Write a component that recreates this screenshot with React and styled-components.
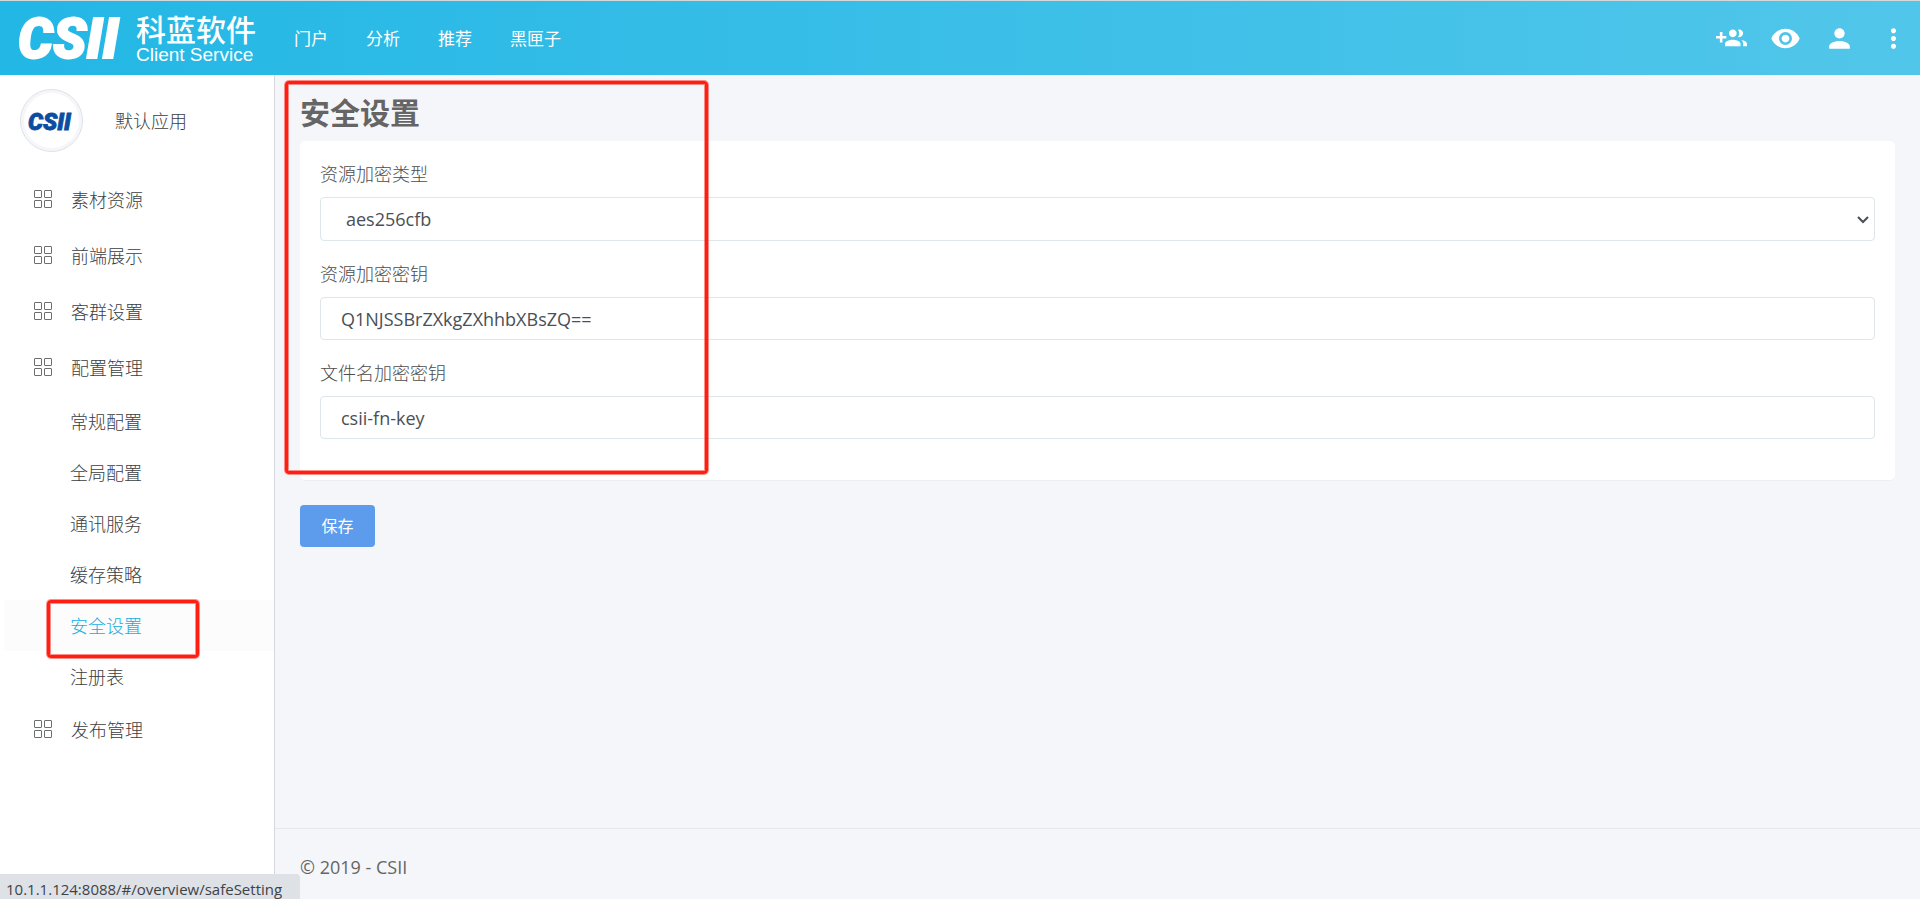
import React, { useState } from 'react'
import styled, { createGlobalStyle, css } from 'styled-components'
import { MdPerson, MdMoreVert, MdVisibility } from 'react-icons/md'

const GlobalStyle = createGlobalStyle`
  :root{
    --primary: #14ade0;
    --text: #656565;
    --border: #dde6e9;
    --bg: #f5f6fa;
    --mark: #ff1f12;
  }
  *{
    box-sizing: border-box;
  }
  body{
    margin: 0;
    background: var(--bg);
    color: var(--text);
    font-family: "Open Sans", "Noto Sans CJK SC", sans-serif;
    font-size: 17px;
    line-height: 26px;
  }
  a{
    color: inherit;
    text-decoration: none;
  }
`

const Page = styled.div`
  display: flex;
  flex-direction: column;
  min-height: 100vh;
`

const HeaderStyled = styled.header`
  display: flex;
  align-items: center;
  height: 75px;
  padding: 0 11px 0 18px;
  border-top: 1px solid #d3d8db;
  background: linear-gradient(to right, #23b7e5, #51c6ea);
  color: #fff;
`

const Brand = styled.a`
  display: flex;
  align-items: center;
  gap: 8px;
  width: 276px;
`

const BrandName = styled.span`
  display: flex;
  flex-direction: column;
  .cn{
    font-size: 30px;
    line-height: 33px;
    font-weight: 500;
  }
  .en{
    font-family: "Liberation Sans", sans-serif;
    font-size: 19px;
    line-height: 18px;
  }
`

const TopNav = styled.nav`
  display: flex;
  flex: 1;
  gap: 38px;
  padding-top: 2px;
`

const Tools = styled.div`
  display: flex;
  gap: 23px;
`

const IconButton = styled.button`
  display: flex;
  padding: 0;
  border: 0;
  background: none;
  color: #fff;
  cursor: pointer;
  svg{
    width: 31px;
    height: 31px;
  }
`

const Body = styled.div`
  display: flex;
  flex: 1;
`

const Sidebar = styled.aside`
  flex: none;
  width: 275px;
  border-right: 1px solid #d5d7dc;
  background: #fff;
  color: #3c3d3e;
  font-size: 18px;
  font-weight: 300;
`

const Profile = styled.div`
  display: flex;
  align-items: center;
  gap: 32px;
  height: 97px;
  padding: 0 20px 6px;
`

const Avatar = styled.span`
  display: flex;
  align-items: center;
  justify-content: center;
  width: 63px;
  height: 63px;
  border: 1px solid #dde0e5;
  border-radius: 50%;
  background: #fff;
  box-shadow: inset 0 0 0 3px #f5f6fa;
`

const Menu = styled.ul`
  margin: 0;
  padding: 0;
  list-style: none;
`

const MenuLink = styled.a`
  display: flex;
  align-items: center;
  gap: 18px;
  height: 56px;
  padding-left: 34px;
`

const SubLink = styled.a`
  position: relative;
  display: flex;
  align-items: center;
  height: 51px;
  margin-left: 4px;
  padding-left: 66px;
  ${({ $active }) => $active && css`
    background: #fcfcfc;
    color: var(--primary);
  `}
`

const mark = css`
  position: absolute;
  border: 3px solid var(--mark);
  border-radius: 4px;
  box-shadow: 0 0 0 1px rgba(255, 31, 18, .5), inset 0 0 0 1px rgba(255, 31, 18, .5);
  pointer-events: none;
`

const LinkMark = styled.span`
  ${mark}
  top: 0;
  left: 43px;
  width: 152px;
  height: 58px;
`

const FormMark = styled.span`
  ${mark}
  top: 6px;
  left: 10px;
  width: 423px;
  height: 393px;
`

const Content = styled.div`
  display: flex;
  flex: 1;
  flex-direction: column;
  min-width: 0;
`

const Main = styled.main`
  position: relative;
  flex: 1;
  padding: 18px 25px;
`

const Title = styled.h1`
  margin: 0 0 8px;
  font-size: 30px;
  line-height: 40px;
  font-weight: 700;
`

const Card = styled.div`
  display: flex;
  flex-direction: column;
  gap: 20px;
  margin-bottom: 24px;
  padding: 20px 20px 41px;
  border-bottom: 1px solid #eceef2;
  border-radius: 5px;
  background: #fff;
`

const Field = styled.div`
  display: flex;
  flex-direction: column;
  gap: 10px;
  label{
    color: #4c4c4c;
    font-size: 18px;
    font-weight: 300;
  }
`

const control = css`
  width: 100%;
  border: 1px solid var(--border);
  border-radius: 4px;
  background: #fff;
  color: #495057;
  font-family: inherit;
  font-size: 18px;
`

const SelectBox = styled.div`
  position: relative;
  svg{
    position: absolute;
    top: 18px;
    right: 5px;
    pointer-events: none;
  }
`

const Select = styled.select`
  ${control}
  display: block;
  height: 44px;
  padding: 0 25px;
  appearance: none;
`

const Input = styled.input`
  ${control}
  height: 43px;
  padding: 0 20px;
`

const SaveButton = styled.button`
  width: 75px;
  height: 42px;
  padding: 0 0 2px;
  border: 0;
  border-radius: 4px;
  background: #5d9cec;
  color: #fff;
  font-family: inherit;
  font-size: 16px;
  cursor: pointer;
`

const Footer = styled.footer`
  height: 71px;
  padding: 25px 25px 0;
  border-top: 1px solid #e4eaec;
  font-size: 18px;
`

const StatusBar = styled.div`
  position: fixed;
  bottom: 0;
  left: 0;
  width: 300px;
  height: 25px;
  padding: 2px 6px 0;
  border-radius: 0 4px 0 0;
  background: #dee1e6;
  color: #3f4347;
  font-size: 15px;
  white-space: nowrap;
`

const LogoText = styled.text`
  font-family: Roboto, "Liberation Sans", sans-serif;
  font-style: italic;
  font-weight: 900;
  fill: currentColor;
  stroke: currentColor;
  stroke-width: 2px;
`

function Logo({ width, color }) {
  return (
    <svg width={width} viewBox="0 -12 110 70" color={color} role="img" aria-label="CSII">
      <LogoText x="0" y="43" fontSize="55">CSII</LogoText>
    </svg>
  )
}

function GroupAddIcon() {
  return (
    <svg viewBox="0 0 24 24" fill="currentColor">
      <path d="M8 10H5V7H3v3H0v2h3v3h2v-3h3v-2zm10 1c1.66 0 2.99-1.34 2.99-3S19.66 5 18 5c-.32 0-.63.05-.91.14.57.81.9 1.79.9 2.86s-.34 2.04-.9 2.86c.28.09.59.14.91.14zm-5 0c1.66 0 2.99-1.34 2.99-3S14.66 5 13 5c-1.66 0-3 1.34-3 3s1.34 3 3 3zm6.62 2.16c.83.73 1.38 1.66 1.38 2.84v2h3v-2c0-1.54-2.37-2.49-4.38-2.84zM13 13c-2 0-6 1-6 3v2h12v-2c0-2-4-3-6-3z" />
    </svg>
  )
}

function GridIcon() {
  return (
    <svg width="19" height="20" viewBox="0 0 19 20" fill="none" stroke="#6c6d6e">
      <rect x=".5" y=".5" width="7" height="7" rx=".5" />
      <rect x="10.5" y=".5" width="7" height="7" rx=".5" />
      <rect x=".5" y="10.5" width="7" height="7" rx=".5" />
      <rect x="10.5" y="10.5" width="7" height="7" rx=".5" />
    </svg>
  )
}

function Chevron() {
  return (
    <svg width="14" height="9" viewBox="0 0 14 9" fill="none" stroke="#495057" strokeWidth="2">
      <path d="M2 2l5 5 5-5" />
    </svg>
  )
}

const topLinks = ['门户', '分析', '推荐', '黑匣子']

const menu = [
  { name: '素材资源' },
  { name: '前端展示' },
  { name: '客群设置' },
  {
    name: '配置管理',
    children: ['常规配置', '全局配置', '通讯服务', '缓存策略', '安全设置', '注册表'],
  },
  { name: '发布管理' },
]

function Header() {
  return (
    <HeaderStyled>
      <Brand href="#/">
        <Logo width={110} color="#fff" />
        <BrandName>
          <span className="cn">科蓝软件</span>
          <span className="en">Client Service</span>
        </BrandName>
      </Brand>
      <TopNav>
        {topLinks.map(name => <a href="#/" key={name}>{name}</a>)}
      </TopNav>
      <Tools>
        <IconButton aria-label="添加用户"><GroupAddIcon /></IconButton>
        <IconButton aria-label="预览"><MdVisibility /></IconButton>
        <IconButton aria-label="用户"><MdPerson /></IconButton>
        <IconButton aria-label="更多"><MdMoreVert /></IconButton>
      </Tools>
    </HeaderStyled>
  )
}

function SideMenu({ current }) {
  return (
    <Sidebar>
      <Profile>
        <Avatar><Logo width={47} color="#0b4da2" /></Avatar>
        默认应用
      </Profile>
      <Menu>
        {menu.map(item => (
          <li key={item.name}>
            <MenuLink href="#/overview">
              <GridIcon />
              {item.name}
            </MenuLink>
            {item.children && (
              <Menu>
                {item.children.map(name => (
                  <li key={name}>
                    <SubLink href="#/overview/safeSetting" $active={name === current}>
                      {name}
                      {name === current && <LinkMark />}
                    </SubLink>
                  </li>
                ))}
              </Menu>
            )}
          </li>
        ))}
      </Menu>
    </Sidebar>
  )
}

function App() {
  const [type, setType] = useState('aes256cfb')
  const [key, setKey] = useState('Q1NJSSBrZXkgZXhhbXBsZQ==')
  const [fileKey, setFileKey] = useState('csii-fn-key')

  return (
    <Page>
      <GlobalStyle />
      <Header />
      <Body>
        <SideMenu current="安全设置" />
        <Content>
          <Main>
            <Title>安全设置</Title>
            <Card>
              <Field>
                <label htmlFor="type">资源加密类型</label>
                <SelectBox>
                  <Select id="type" value={type} onChange={e => setType(e.target.value)}>
                    <option value="aes256cfb">aes256cfb</option>
                  </Select>
                  <Chevron />
                </SelectBox>
              </Field>
              <Field>
                <label htmlFor="key">资源加密密钥</label>
                <Input id="key" value={key} onChange={e => setKey(e.target.value)} />
              </Field>
              <Field>
                <label htmlFor="fileKey">文件名加密密钥</label>
                <Input id="fileKey" value={fileKey} onChange={e => setFileKey(e.target.value)} />
              </Field>
            </Card>
            <SaveButton type="button">保存</SaveButton>
            <FormMark />
          </Main>
          <Footer>© 2019 - CSII</Footer>
        </Content>
      </Body>
      <StatusBar>10.1.1.124:8088/#/overview/safeSetting</StatusBar>
    </Page>
  )
}

export default App
